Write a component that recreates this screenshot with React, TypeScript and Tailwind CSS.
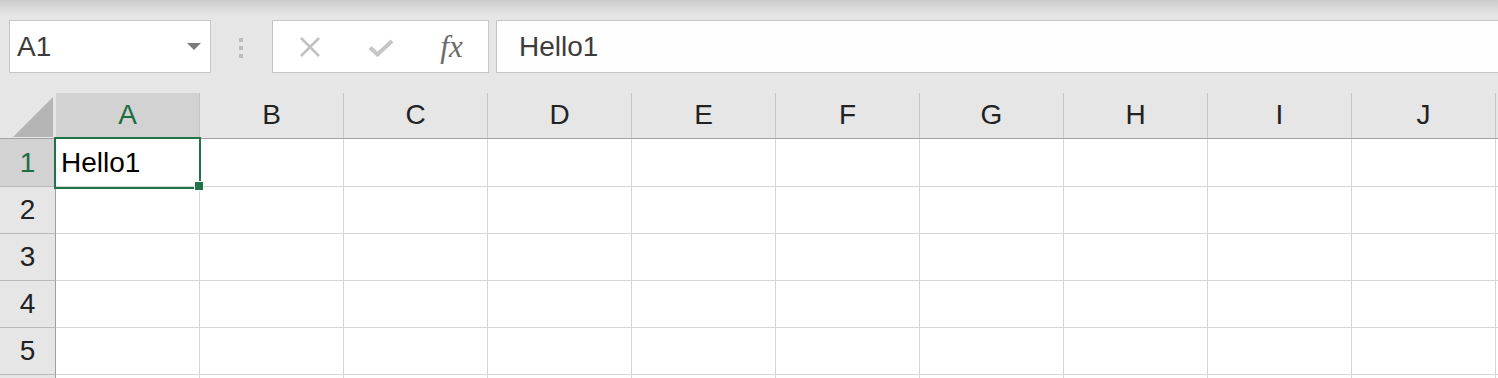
import React from 'react';

const COLUMNS = ['A', 'B', 'C', 'D', 'E', 'F', 'G', 'H', 'I', 'J'];
const ROWS = [1, 2, 3, 4, 5, 6];

const FormulaBar = () => {
    return (
        <div className="flex h-[93px] items-start pl-[9px] pt-[20px] bg-[linear-gradient(to_bottom,#cbcbcb_0px,#e6e6e6_15px)]">
            {/* name box */}
            <div className="flex h-[53px] w-[202px] items-center justify-between border border-[#c6c6c6] bg-white pl-[7px] pr-[9px]">
                <span className="text-[28px] leading-none text-[#3c3c3c]">A1</span>
                <svg width="14" height="7" viewBox="0 0 14 7">
                    <path d="M0 0 H14 L7 7 Z" fill="#7a7a7a" />
                </svg>
            </div>

            {/* grip dots */}
            <div className="ml-[28px] flex h-[53px] flex-col items-center justify-center gap-[4px] pt-[2px]">
                <div className="h-[4px] w-[4px] bg-[#bcbcbc]" />
                <div className="h-[4px] w-[4px] bg-[#bcbcbc]" />
                <div className="h-[4px] w-[4px] bg-[#bcbcbc]" />
            </div>

            {/* cancel / enter / fx */}
            <div className="ml-[29px] flex h-[53px] w-[217px] items-center border border-[#c6c6c6] bg-white pl-[1px]">
                <div className="flex w-[71px] justify-center">
                    <svg width="24" height="24" viewBox="0 0 24 24">
                        <path
                            d="M3 3 L21 21 M21 3 L3 21"
                            stroke="#c2c2c2"
                            strokeWidth="2.6"
                            fill="none"
                        />
                    </svg>
                </div>
                <div className="flex w-[71px] justify-center pt-[2px]">
                    <svg width="26" height="18" viewBox="0 0 26 18">
                        <path
                            d="M2 8.5 L9.5 15.5 L24 2"
                            stroke="#c6c6c6"
                            strokeWidth="4"
                            fill="none"
                        />
                    </svg>
                </div>
                <div className="flex w-[71px] justify-center">
                    <span className="font-['Liberation_Serif',serif] text-[31px] italic leading-none text-[#6a6a6a]">
                        fx
                    </span>
                </div>
            </div>

            {/* formula input */}
            <div className="ml-[7px] flex h-[53px] flex-1 items-center border-y border-l border-[#c6c6c6] bg-[#fefefe] pl-[22px]">
                <span className="text-[28px] leading-none text-[#3c3c3c]">Hello1</span>
            </div>
        </div>
    );
};

const HeaderRow = () => {
    return (
        <div className="flex h-[46px] border-b border-[#a3a3a3]">
            <div className="flex w-[56px] items-end justify-end pb-[1px] pr-[3px]">
                <svg width="40" height="40" viewBox="0 0 40 40">
                    <path d="M40 0 V40 H0 Z" fill="#b5b5b5" />
                </svg>
            </div>
            {COLUMNS.map((col) => (
                <div
                    key={col}
                    className={
                        col === 'A'
                            ? 'flex w-[144px] shrink-0 items-center justify-center border-r border-[#c4c4c4] bg-[#d2d2d2] pb-[2px] text-[28px] leading-none text-[#1f6b43]'
                            : 'flex w-[144px] shrink-0 items-center justify-center border-r border-[#c4c4c4] pb-[2px] text-[28px] leading-none text-[#222]'
                    }
                >
                    {col}
                </div>
            ))}
        </div>
    );
};

const SheetRow = ({ row }: { row: number }) => {
    const selected = row === 1;
    return (
        <div className={selected ? 'flex h-[48px]' : 'flex h-[47px]'}>
            <div
                className={
                    selected
                        ? 'flex w-[56px] shrink-0 items-center justify-center border-r border-b border-r-[#9f9f9f] border-b-[#b9b9b9] bg-[#d2d2d2] text-[28px] leading-none text-[#1f6b43]'
                        : 'flex w-[56px] shrink-0 items-center justify-center border-r border-b border-r-[#9f9f9f] border-b-[#b9b9b9] text-[28px] leading-none text-[#222]'
                }
            >
                {row < 6 ? row : null}
            </div>
            {COLUMNS.map((col) => (
                <div
                    key={col}
                    className="relative flex w-[144px] shrink-0 items-center border-r border-b border-[#d6d6d6] bg-white pl-[5px] text-[28px] leading-none text-black"
                >
                    {selected && col === 'A' && (
                        <>
                            Hello1
                            <div className="absolute -left-[2px] -top-[2px] z-10 h-[52px] w-[147px] border-2 border-[#217346]" />
                            <div className="absolute left-[138px] top-[42px] z-20 h-[10px] w-[10px] border border-white bg-[#217346]" />
                        </>
                    )}
                </div>
            ))}
            <div className="flex-1 border-b border-[#d6d6d6] bg-white" />
        </div>
    );
};

export default function App() {
    return (
        <div className="h-[378px] w-[1498px] overflow-hidden bg-[#e6e6e6] font-['Liberation_Sans',Arial,sans-serif]">
            <FormulaBar />
            <HeaderRow />
            {ROWS.map((row) => (
                <SheetRow key={row} row={row} />
            ))}
        </div>
    );
}
